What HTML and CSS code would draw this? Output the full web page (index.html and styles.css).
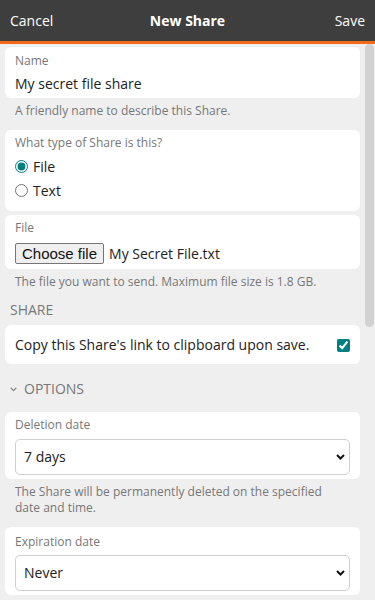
FILE: index.html
```html
<!DOCTYPE html>
<html lang="en">
<head>
<meta charset="utf-8">
<title>New Share</title>
<link rel="stylesheet" href="styles.css">
</head>
<body>
<header class="header">
  <span class="hbtn left">Cancel</span>
  <span class="title">New Share</span>
  <span class="hbtn right">Save</span>
</header>
<div class="body-row">
<main class="content">
  <div class="card">
    <div class="label">Name</div>
    <div class="value">My secret file share</div>
  </div>
  <div class="help">A friendly name to describe this Share.</div>

  <div class="card card-type">
    <div class="label">What type of Share is this?</div>
    <label class="radio-row"><input type="radio" name="t" checked><span>File</span></label>
    <label class="radio-row"><input type="radio" name="t"><span>Text</span></label>
  </div>
  <div class="card card-file">
    <div class="label">File</div>
    <div class="file-row"><span class="file-btn">Choose file</span><span class="file-name">My Secret File.txt</span></div>
  </div>
  <div class="help">The file you want to send. Maximum file size is 1.8 GB.</div>

  <div class="section">SHARE</div>
  <div class="card check-card">
    <span class="check-text">Copy this Share's link to clipboard upon save.</span>
    <input type="checkbox" class="check" checked>
  </div>

  <div class="section options">
    <svg class="opt-chev" width="7" height="5" viewBox="0 0 7 5"><path d="M0.7 0.8 L3.5 3.6 L6.3 0.8" fill="none" stroke="#8a8a8a" stroke-width="1.3"/></svg>
    <span>OPTIONS</span>
  </div>

  <div class="card card-select">
    <div class="label">Deletion date</div>
    <div class="select-wrap">
      <div class="select">7 days</div>
      <svg class="sel-chev" width="9" height="6" viewBox="0 0 9 6"><path d="M1 1 L4.5 4.5 L8 1" fill="none" stroke="#111" stroke-width="2"/></svg>
    </div>
  </div>
  <div class="help">The Share will be permanently deleted on the specified date and time.</div>

  <div class="card card-select last">
    <div class="label">Expiration date</div>
    <div class="select-wrap">
      <div class="select">Never</div>
      <svg class="sel-chev" width="9" height="6" viewBox="0 0 9 6"><path d="M1 1 L4.5 4.5 L8 1" fill="none" stroke="#111" stroke-width="2"/></svg>
    </div>
  </div>
</main>
<div class="scrollbar"><div class="thumb"></div></div>
</div>
</body>
</html>
```

FILE: styles.css
```css
* { box-sizing: border-box; }

html, body {
  margin: 0;
  height: 600px;
  overflow: hidden;
}

body {
  font-family: "Open Sans", "Noto Sans", sans-serif;
  background: #efefef;
  color: #333;
  display: flex;
  flex-direction: column;
}

.header {
  height: 44px;
  flex: none;
  background: #3e3e3e;
  border-bottom: 3px solid #f26a1b;
  display: grid;
  grid-template-columns: 1fr auto 1fr;
  align-items: center;
  padding: 0 10px;
  color: #fff;
  font-size: 14px;
}

.hbtn.right { justify-self: end; }
.title { font-weight: 700; }

.body-row {
  flex: 1;
  display: flex;
  min-height: 0;
}

.content {
  flex: 1;
  min-width: 0;
  overflow: hidden;
  padding-top: 3px;
}

.scrollbar {
  width: 10px;
  flex: none;
  background: #efefef;
}

.thumb {
  width: 9px;
  height: 283px;
  background: #d2d2d2;
  border-radius: 5px;
}

.card {
  background: #fff;
  border-radius: 6px;
  margin: 0 5px;
  padding: 6px 10px 4px;
}

.label {
  font-size: 12px;
  line-height: 16px;
  color: #777;
}

.value {
  font-size: 14px;
  line-height: 20px;
  margin-top: 5px;
  color: #222;
}

.help {
  font-size: 12px;
  line-height: 16px;
  color: #777;
  padding: 5px 22px 0 15px;
  margin-bottom: 11px;
}

.card-type {
  padding: 5px 10px 9px;
  margin-bottom: 4px;
}

.radio-row {
  display: flex;
  align-items: center;
  height: 24px;
  font-size: 14px;
  color: #222;
}

.radio-row:first-of-type { margin-top: 3px; }

.radio-row input {
  margin: 0 5px 0 0;
  width: 13px;
  height: 13px;
  accent-color: #017f80;
}

.card-file { padding: 5px 10px 5px; }

.file-row {
  display: flex;
  align-items: center;
  margin-top: 7px;
  height: 21px;
}

.file-btn {
  font-family: "Liberation Sans", Arial, sans-serif;
  font-size: 15px;
  color: #111;
  background: #efefef;
  border: 1px solid #767676;
  border-radius: 2px;
  height: 21px;
  line-height: 19px;
  padding: 0 6px;
}

.file-name {
  font-size: 14px;
  color: #222;
  margin-left: 5px;
}

.section {
  font-size: 14px;
  line-height: 20px;
  color: #777;
  padding: 0 10px;
  margin: -1px 0 5px;
}

.check-card {
  display: flex;
  align-items: center;
  justify-content: space-between;
  padding: 10px 10px 9px;
  margin-bottom: 15px;
}

.check-text {
  font-size: 14px;
  line-height: 20px;
  color: #222;
}

.check {
  margin: 0;
  width: 13px;
  height: 13px;
  accent-color: #017f80;
}

.options {
  display: flex;
  align-items: center;
  margin: 0 0 13px;
}

.opt-chev { margin-right: 7px; }

.card-select { padding: 5px 10px 4px; }
.card-select.last { padding-top: 7px; }

.select-wrap {
  position: relative;
  margin-top: 6px;
}

.card-select.last .select-wrap { margin-top: 5px; }

.select {
  height: 36px;
  border: 1px solid #cfcfcf;
  border-radius: 5px;
  padding: 0 8px;
  font-size: 14px;
  line-height: 34px;
  color: #222;
}

.sel-chev {
  position: absolute;
  right: 5px;
  top: 15px;
}
```
